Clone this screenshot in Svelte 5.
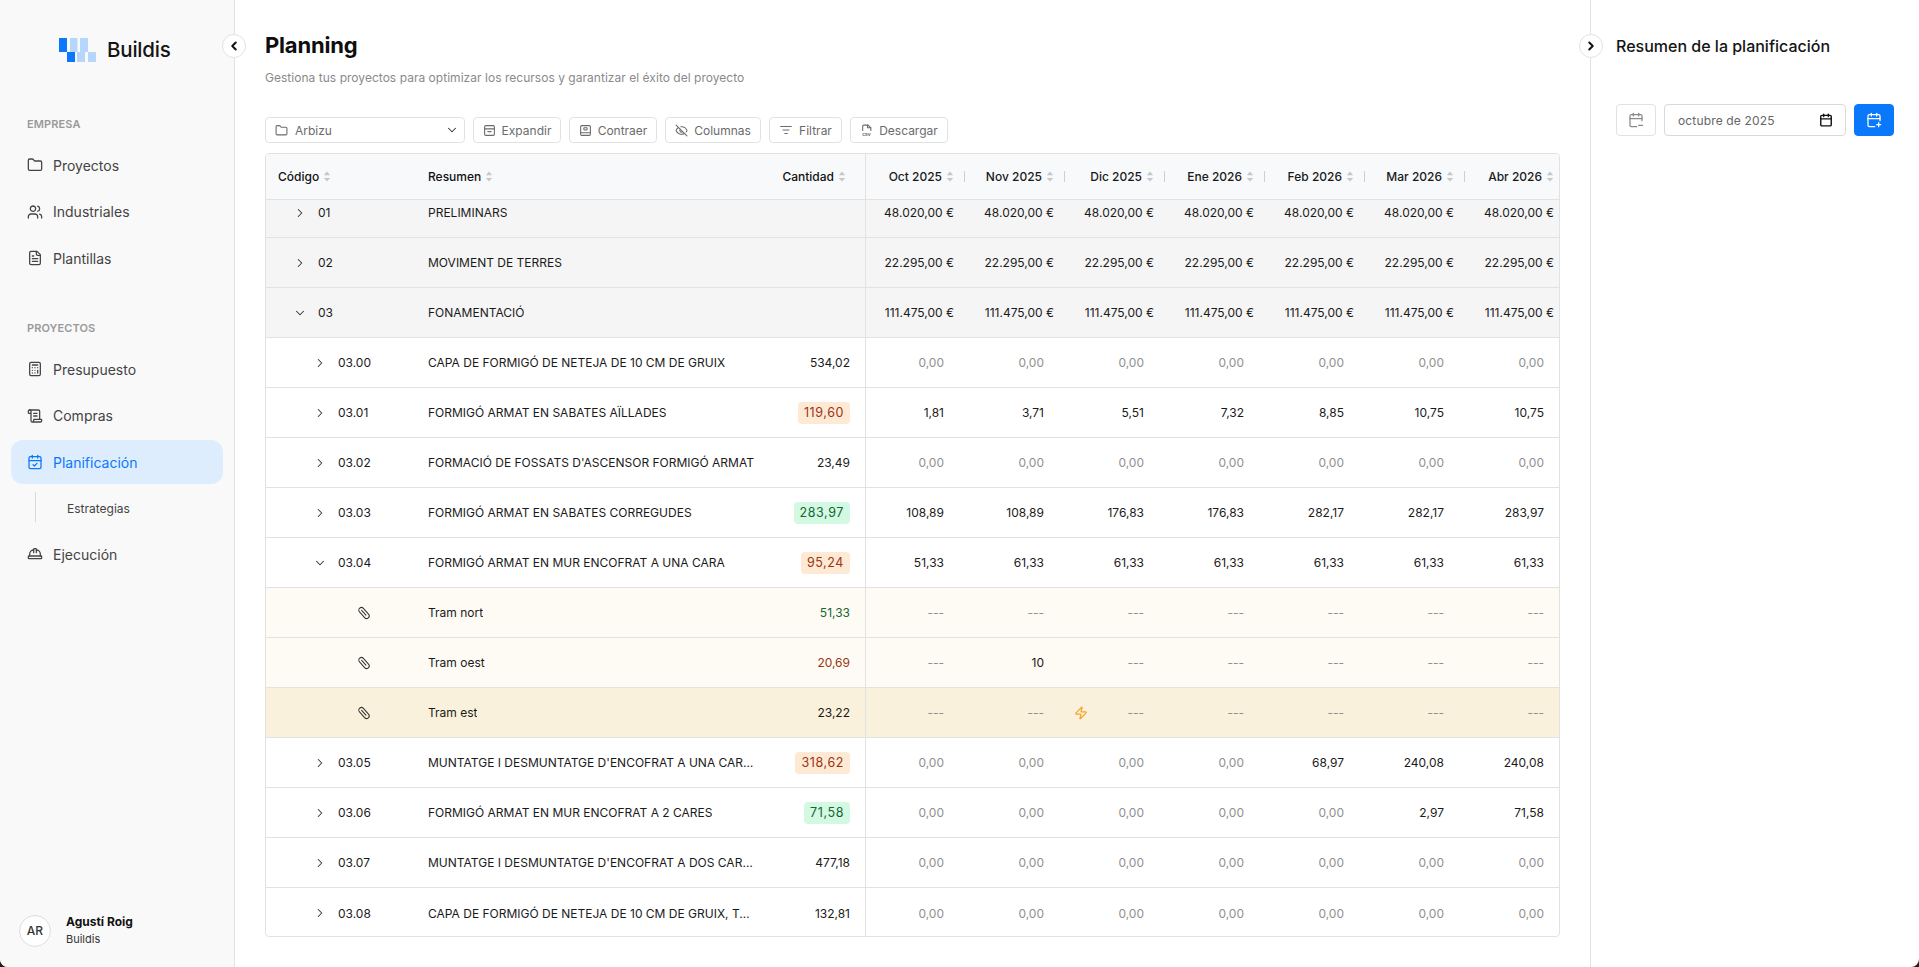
<script>
  const I = {
    folder: '<path d="M20 20a2 2 0 0 0 2-2V8a2 2 0 0 0-2-2h-7.9a2 2 0 0 1-1.69-.9L9.6 3.9A2 2 0 0 0 7.93 3H4a2 2 0 0 0-2 2v13a2 2 0 0 0 2 2Z"/>',
    users: '<path d="M16 21v-2a4 4 0 0 0-4-4H6a4 4 0 0 0-4 4v2"/><circle cx="9" cy="7" r="4"/><path d="M22 21v-2a4 4 0 0 0-3-3.87"/><path d="M16 3.13a4 4 0 0 1 0 7.75"/>',
    file: '<path d="M15 2H6a2 2 0 0 0-2 2v16a2 2 0 0 0 2 2h12a2 2 0 0 0 2-2V7Z"/><path d="M14 2v4a2 2 0 0 0 2 2h4"/><path d="M10 9H8"/><path d="M16 13H8"/><path d="M16 17H8"/>',
    calc: '<rect x="4" y="2" width="16" height="20" rx="2"/><path d="M8 6h8"/><path d="M16 14v4"/><path d="M16 10h.01"/><path d="M12 10h.01"/><path d="M8 10h.01"/><path d="M12 14h.01"/><path d="M8 14h.01"/><path d="M12 18h.01"/><path d="M8 18h.01"/>',
    scroll: '<path d="M15 12h-5"/><path d="M15 8h-5"/><path d="M19 17V5a2 2 0 0 0-2-2H4"/><path d="M8 21h12a2 2 0 0 0 2-2v-1a1 1 0 0 0-1-1H11a1 1 0 0 0-1 1v1a2 2 0 1 1-4 0V5a2 2 0 1 0-4 0v2a1 1 0 0 0 1 1h3"/>',
    calcheck: '<path d="M8 2v4"/><path d="M16 2v4"/><rect x="3" y="4" width="18" height="18" rx="2"/><path d="M3 10h18"/><path d="m9 16 2 2 4-4"/>',
    hat: '<path d="M10 10V5a1 1 0 0 1 1-1h2a1 1 0 0 1 1 1v5"/><path d="M14 6a6 6 0 0 1 6 6v3"/><path d="M4 15v-3a6 6 0 0 1 6-6"/><rect x="2" y="15" width="20" height="4" rx="1"/>',
    left: '<path d="m15 18-6-6 6-6"/>',
    right: '<path d="m9 18 6-6-6-6"/>',
    down: '<path d="m6 9 6 6 6-6"/>',
    expand: '<rect x="3" y="3" width="18" height="18" rx="2"/><path d="M3 9h18"/><path d="M9 14h6"/>',
    collapse: '<rect x="3" y="3" width="18" height="18" rx="2"/><path d="M3 16h18"/><rect x="9" y="7" width="6" height="4" rx="1"/>',
    eyeoff: '<path d="M10.733 5.076a10.744 10.744 0 0 1 11.205 6.575 1 1 0 0 1 0 .696 10.747 10.747 0 0 1-1.444 2.49"/><path d="M14.084 14.158a3 3 0 0 1-4.242-4.242"/><path d="M17.479 17.499a10.75 10.75 0 0 1-15.417-5.151 1 1 0 0 1 0-.696 10.75 10.75 0 0 1 4.446-5.143"/><path d="m2 2 20 20"/>',
    filter: '<path d="M3 6h18"/><path d="M7 12h10"/><path d="M10 18h4"/>',
    csv: '<path d="M5 12V4a2 2 0 0 1 2-2h8l5 5v5"/><path d="M14 2v5h6"/><text x="12" y="22" text-anchor="middle" font-size="9" font-weight="700" stroke="none" fill="currentColor" font-family="Inter, sans-serif">csv</text>',
    clip: '<g transform="rotate(-42 12 12)"><rect x="7.5" y="1" width="9" height="22" rx="4.5"/><path d="M12 6v11"/></g>',
    zap: '<path d="M4 14a1 1 0 0 1-.78-1.63l9.9-10.2a.5.5 0 0 1 .86.46l-1.92 6.02A1 1 0 0 0 13 10h7a1 1 0 0 1 .78 1.63l-9.9 10.2a.5.5 0 0 1-.86-.46l1.92-6.02A1 1 0 0 0 11 14z"/>',
    calminus: '<path d="M8 2v4"/><path d="M16 2v4"/><path d="M3 10h18"/><path d="M21 13V6a2 2 0 0 0-2-2H5a2 2 0 0 0-2 2v14a2 2 0 0 0 2 2h8"/><path d="M16 20h6"/>',
    calplus: '<path d="M8 2v4"/><path d="M16 2v4"/><path d="M3 10h18"/><path d="M21 13V6a2 2 0 0 0-2-2H5a2 2 0 0 0-2 2v14a2 2 0 0 0 2 2h8"/><path d="M16 19h6"/><path d="M19 16v6"/>',
    cal: '<path d="M8 2v4"/><path d="M16 2v4"/><rect x="3" y="4" width="18" height="18" rx="2"/><path d="M3 10h18"/>'
  };

  const empresa = [['folder', 'Proyectos'], ['users', 'Industriales'], ['file', 'Plantillas']];
  const tools = [['expand', 'Expandir'], ['collapse', 'Contraer'], ['eyeoff', 'Columnas'], ['filter', 'Filtrar'], ['csv', 'Descargar']];
  const months = ['Oct 2025', 'Nov 2025', 'Dic 2025', 'Ene 2026', 'Feb 2026', 'Mar 2026', 'Abr 2026'];

  const fill = (v) => Array(7).fill(v);
  const zeros = fill('0,00');
  const dash = fill('---');

  const rows = [
    { kind: 'group', lvl: 'l0', icon: 'right', code: '01', name: 'PRELIMINARS', qty: '', vals: fill('48.020,00 €') },
    { kind: 'group', lvl: 'l0', icon: 'right', code: '02', name: 'MOVIMENT DE TERRES', qty: '', vals: fill('22.295,00 €') },
    { kind: 'group', lvl: 'l0', icon: 'down', code: '03', name: 'FONAMENTACIÓ', qty: '', vals: fill('111.475,00 €') },
    { kind: 'plain', lvl: 'l1', icon: 'right', code: '03.00', name: 'CAPA DE FORMIGÓ DE NETEJA DE 10 CM DE GRUIX', qty: '534,02', vals: zeros },
    { kind: 'plain', lvl: 'l1', icon: 'right', code: '03.01', name: 'FORMIGÓ ARMAT EN SABATES AÏLLADES', qty: '119,60', tone: 'orange', vals: ['1,81', '3,71', '5,51', '7,32', '8,85', '10,75', '10,75'] },
    { kind: 'plain', lvl: 'l1', icon: 'right', code: '03.02', name: "FORMACIÓ DE FOSSATS D'ASCENSOR FORMIGÓ ARMAT", qty: '23,49', vals: zeros },
    { kind: 'plain', lvl: 'l1', icon: 'right', code: '03.03', name: 'FORMIGÓ ARMAT EN SABATES CORREGUDES', qty: '283,97', tone: 'green', vals: ['108,89', '108,89', '176,83', '176,83', '282,17', '282,17', '283,97'] },
    { kind: 'plain', lvl: 'l1', icon: 'down', code: '03.04', name: 'FORMIGÓ ARMAT EN MUR ENCOFRAT A UNA CARA', qty: '95,24', tone: 'orange', vals: ['51,33', '61,33', '61,33', '61,33', '61,33', '61,33', '61,33'] },
    { kind: 'tram', lvl: 'l2', icon: 'clip', code: '', name: 'Tram nort', qty: '51,33', text: 'tgreen', vals: dash },
    { kind: 'tram', lvl: 'l2', icon: 'clip', code: '', name: 'Tram oest', qty: '20,69', text: 'tred', vals: ['---', '10', '---', '---', '---', '---', '---'] },
    { kind: 'tram sel', lvl: 'l2', icon: 'clip', code: '', name: 'Tram est', qty: '23,22', zap: true, vals: dash },
    { kind: 'plain', lvl: 'l1', icon: 'right', code: '03.05', name: "MUNTATGE I DESMUNTATGE D'ENCOFRAT A UNA CARA VISTA", qty: '318,62', tone: 'orange', vals: ['0,00', '0,00', '0,00', '0,00', '68,97', '240,08', '240,08'] },
    { kind: 'plain', lvl: 'l1', icon: 'right', code: '03.06', name: 'FORMIGÓ ARMAT EN MUR ENCOFRAT A 2 CARES', qty: '71,58', tone: 'green', vals: ['0,00', '0,00', '0,00', '0,00', '0,00', '2,97', '71,58'] },
    { kind: 'plain', lvl: 'l1', icon: 'right', code: '03.07', name: "MUNTATGE I DESMUNTATGE D'ENCOFRAT A DOS CARES VISTES", qty: '477,18', vals: zeros },
    { kind: 'plain', lvl: 'l1', icon: 'right', code: '03.08', name: 'CAPA DE FORMIGÓ DE NETEJA DE 10 CM DE GRUIX, TOTA LA CARA', qty: '132,81', vals: zeros }
  ];

  const muted = (v) => v === '0,00' || v === '---';
</script>

{#snippet icon(name, cls = '')}
  <svg class="ic {cls}" viewBox="0 0 24 24" fill="none" stroke="currentColor" stroke-width="2" stroke-linecap="round" stroke-linejoin="round" aria-hidden="true">{@html I[name]}</svg>
{/snippet}

{#snippet sort()}
  <svg class="sort" viewBox="0 0 8 12" aria-hidden="true"><path d="M4 0.5 7.5 4.5H0.5Z"/><path d="M4 11.5 0.5 7.5H7.5Z"/></svg>
{/snippet}

<div class="app">
  <aside class="side">
    <div class="logo">
      <svg class="mark" viewBox="0 0 37 24" aria-hidden="true">
        <rect class="b" x="0" y="0" width="8" height="14"/>
        <rect class="b" x="8" y="14" width="8" height="10"/>
        <rect class="l" x="11" y="0" width="7.5" height="14"/>
        <rect class="l" x="18" y="14" width="8" height="10"/>
        <rect class="l" x="21" y="0" width="8" height="14"/>
        <rect class="l" x="29" y="14" width="8" height="10"/>
      </svg>
      <span class="brand">Buildis</span>
    </div>

    <div class="label first">EMPRESA</div>
    <nav class="nav">
      {#each empresa as [ic, t]}
        <div class="item">{@render icon(ic, 'i16')}<span>{t}</span></div>
      {/each}
    </nav>

    <div class="label second">PROYECTOS</div>
    <nav class="nav">
      <div class="item">{@render icon('calc', 'i16')}<span>Presupuesto</span></div>
      <div class="item">{@render icon('scroll', 'i16')}<span>Compras</span></div>
      <div class="item active">{@render icon('calcheck', 'i16')}<span>Planificación</span></div>
    </nav>
    <div class="sub"><span>Estrategias</span></div>
    <div class="item">{@render icon('hat', 'i16')}<span>Ejecución</span></div>

    <div class="user">
      <div class="avatar">AR</div>
      <div class="who">
        <strong>Agustí Roig</strong>
        <span>Buildis</span>
      </div>
    </div>
    <button class="toggle" aria-label="Contraer menú">{@render icon('left', 'i10')}</button>
  </aside>

  <main class="main">
    <h1>Planning</h1>
    <p class="lead">Gestiona tus proyectos para optimizar los recursos y garantizar el éxito del proyecto</p>

    <div class="toolbar">
      <div class="select">
        {@render icon('folder', 'i12')}
        <span class="grow">Arbizu</span>
        {@render icon('down', 'i14 dark')}
      </div>
      {#each tools as [ic, t]}
        <button class="tool {ic}">{@render icon(ic, ic === 'filter' ? 'i14' : 'i12')}<span>{t}</span></button>
      {/each}
    </div>

    <div class="table">
      <div class="row head">
        <div class="frozen">
          <div class="c-code hcode">Código {@render sort()}</div>
          <div class="c-name">Resumen {@render sort()}</div>
          <div class="c-qty">Cantidad {@render sort()}</div>
        </div>
        {#each months as m}
          <div class="month hm"><span class="ht">{m}</span>{@render sort()}<i class="sep"></i></div>
        {/each}
      </div>
      <div class="body">
        <div class="inner">
          {#each rows as r}
            <div class="row {r.kind}">
              <div class="frozen">
                <div class="c-code {r.lvl}">
                  {@render icon(r.icon, 'i14 dark')}
                  {#if r.code}<span>{r.code}</span>{/if}
                </div>
                <div class="c-name"><span class="trunc">{r.name}</span></div>
                <div class="c-qty">
                  {#if r.tone}<span class="badge {r.tone}">{r.qty}</span>
                  {:else}<span class={r.text}>{r.qty}</span>{/if}
                </div>
              </div>
              {#each r.vals as v, i}
                <div class="month" class:muted={muted(v)} class:money={r.kind === 'group'}>
                  {#if r.zap && i === 2}{@render icon('zap', 'i14 zap')}{/if}
                  {v}
                </div>
              {/each}
            </div>
          {/each}
        </div>
      </div>
    </div>
  </main>

  <aside class="panel">
    <h2>Resumen de la planificación</h2>
    <div class="dates">
      <button class="dbtn" aria-label="Mes anterior">{@render icon('calminus', 'i16')}</button>
      <div class="dinput"><span>octubre de 2025</span>{@render icon('cal', 'i14 black')}</div>
      <button class="dbtn blue" aria-label="Mes siguiente">{@render icon('calplus', 'i16')}</button>
    </div>
    <button class="toggle" aria-label="Contraer resumen">{@render icon('right', 'i10')}</button>
  </aside>
</div>

<style>
  :global(body) { margin: 0; background: #2b1d14; }
  .app {
    display: flex; width: 1919px; height: 967px; overflow: hidden; background: #fff;
    border-radius: 0 0 8px 8px;
    font-family: Inter, "Noto Sans", sans-serif; font-size: 12px; color: #1a1a1a;
  }
  .ic { flex: none; display: block; }
  .i10 { width: 14px; height: 14px; stroke-width: 3.4; }
  .i12 { width: 13px; height: 13px; }
  .i14 { width: 14px; height: 14px; }
  .i16 { width: 16px; height: 16px; stroke-width: 1.9; }
  .dark { color: #333; stroke-width: 1.8; }
  .black { color: #111; stroke-width: 2.4; }

  .side {
    position: relative; flex: none; box-sizing: border-box; width: 235px; height: 967px;
    display: flex; flex-direction: column; background: #f9f9f9; border-right: 1px solid #e2e2e2;
    padding: 37px 0 20px;
  }
  .logo { display: flex; align-items: center; gap: 11px; padding-left: 59px; height: 26px; }
  .mark { width: 37px; height: 24px; flex: none; margin-top: -1px; }
  .mark .b { fill: #0a78fb; }
  .mark .l { fill: #b5d7fd; }
  .brand { font-size: 20.5px; font-weight: 500; color: #141414; letter-spacing: -0.2px; margin-top: -2px; }
  .label { padding-left: 27px; font-size: 11px; line-height: 14px; font-weight: 600; color: #9a9a9a; letter-spacing: 0.1px; }
  .label.first { margin-top: 54px; margin-bottom: 12px; }
  .label.second { margin-top: 41px; margin-bottom: 12px; }
  .nav { display: flex; flex-direction: column; gap: 2.5px; }
  .item {
    display: flex; align-items: center; gap: 10px; height: 44px; margin: 0 11px; padding-left: 16px;
    border-radius: 12px; font-size: 14px; color: #444;
  }
  .item.active { background: #deedfe; color: #0a78fb; }
  .sub {
    margin: 8px 0 10px 35px; height: 30px; border-left: 1px solid #d9d9d9; padding: 2px 0 0 31px; box-sizing: border-box;
    display: flex; align-items: center; font-size: 12px; color: #444;
  }
  .user { margin-top: auto; display: flex; align-items: center; gap: 15px; padding-left: 19px; }
  .avatar {
    width: 32px; height: 32px; box-sizing: border-box; border-radius: 50%; background: #fff; border: 1px solid #dedede;
    display: flex; align-items: center; justify-content: center; font-size: 12px; font-weight: 500; color: #333;
  }
  .who { display: flex; flex-direction: column; gap: 3px; line-height: 15px; }
  .who strong { font-size: 12px; font-weight: 700; color: #111; }
  .who span { font-size: 11px; color: #333; }
  .toggle {
    position: absolute; top: 34px; left: -12px; width: 24px; height: 24px; padding: 0; box-sizing: border-box;
    border-radius: 50%; border: 1px solid #e2e2e2; background: #fff; color: #111;
    display: flex; align-items: center; justify-content: center;
  }
  .side .toggle { left: auto; right: -12px; }

  .main { flex: none; box-sizing: border-box; width: 1355px; padding: 30px 30px 0; }
  h1 { margin: 0; font-size: 22px; line-height: 30px; font-weight: 700; color: #0e0e0e; letter-spacing: -0.2px; }
  .lead { margin: 9px 0 0; font-size: 12px; line-height: 17px; color: #8a8a8a; letter-spacing: 0.03px; }
  .toolbar { display: flex; gap: 8px; margin-top: 31px; height: 26px; }
  .select, .tool {
    box-sizing: border-box; height: 26px; border: 1px solid #e2e2e2; border-radius: 4px; background: #fff;
    display: flex; align-items: center; color: #6b6b6b; font: inherit; font-size: 12px; padding: 0;
  }
  .select { width: 200px; padding: 0 5px 0 9px; gap: 7px; }
  .grow { flex: 1; }
  .tool { justify-content: center; gap: 6px; }
  .tool.expand, .tool.collapse { width: 88px; }
  .tool.eyeoff { width: 96px; }
  .tool.filter { width: 73px; }
  .tool.csv { width: 98px; }
  .table {
    box-sizing: border-box; width: 1295px; height: 784px; margin-top: 10px; overflow: hidden;
    border: 1px solid #e2e2e2; border-radius: 4px;
  }
  .row { display: flex; box-sizing: border-box; height: 50px; border-bottom: 1px solid #e2e2e2; align-items: stretch; }
  .row.head { height: 46px; background: #f8f9fb; font-weight: 500; color: #111; }
  .frozen { flex: none; width: 600px; box-sizing: border-box; display: flex; border-right: 1px solid #e2e2e2; }
  .c-code { flex: none; width: 162px; box-sizing: border-box; display: flex; align-items: center; gap: 11px; }
  .hcode { padding-left: 12px; gap: 4px; }
  .l0 { padding-left: 27px; }
  .l1 { padding-left: 47px; }
  .l2 { padding-left: 91px; }
  .c-name { flex: none; width: 327px; display: flex; align-items: center; gap: 4px; overflow: hidden; }
  .trunc { white-space: nowrap; overflow: hidden; text-overflow: ellipsis; }
  .c-qty { flex: 1; display: flex; align-items: center; justify-content: flex-end; gap: 4px; padding-right: 15px; }
  .head .c-qty { padding-right: 19px; }
  .month {
    flex: none; width: 100px; box-sizing: border-box; position: relative; display: flex; align-items: center;
    justify-content: flex-end; padding-right: 22px; color: #1a1a1a;
  }
  .month.muted { color: #8f8f8f; }
  .month.money { padding-right: 12px; }
  .hm { padding-right: 12px; gap: 4px; }
  .sep { position: absolute; right: 1px; top: 17px; width: 1px; height: 11px; background: #cfcfcf; }
  .sort { width: 8px; height: 11px; flex: none; fill: #c4c8cd; }
  .body { height: 737px; overflow: hidden; }
  .inner { margin-top: -12px; }
  .inner .row:last-child { border-bottom: none; }
  .group { background: #f5f5f5; }
  .tram { background: #fdfbf4; }
  .sel { background: #f9f1dc; }
  .badge { padding: 0 6px; height: 22px; line-height: 22px; border-radius: 4px; font-size: 12.5px; letter-spacing: 0.6px; }
  .orange { background: #fee9d5; color: #9a3412; }
  .green { background: #d3f9e2; color: #166534; }
  .tgreen { color: #166534; }
  .tred { color: #9a3412; }
  .zap { position: absolute; left: 8px; top: 18px; color: #f5a32a; }

  .panel { position: relative; flex: 1; box-sizing: border-box; border-left: 1px solid #e2e2e2; padding: 34px 25px 0 25px; }
  h2 { margin: 0; font-size: 16px; line-height: 24px; font-weight: 500; color: #141414; }
  .dates { display: flex; gap: 8px; margin-top: 46px; height: 32px; }
  .dbtn {
    width: 40px; height: 32px; box-sizing: border-box; border: 1px solid #e2e2e2; border-radius: 4px; background: #fff;
    color: #8a8a8a; display: flex; align-items: center; justify-content: center; padding: 0;
  }
  .dbtn.blue { background: #0a78fb; border-color: #0a78fb; color: #fff; }
  .dinput {
    width: 182px; height: 32px; box-sizing: border-box; border: 1px solid #d9d9d9; border-radius: 4px; padding: 0 12px 0 13px;
    display: flex; align-items: center; justify-content: space-between; color: #666; font-size: 12px; letter-spacing: 0.15px;
  }
</style>
